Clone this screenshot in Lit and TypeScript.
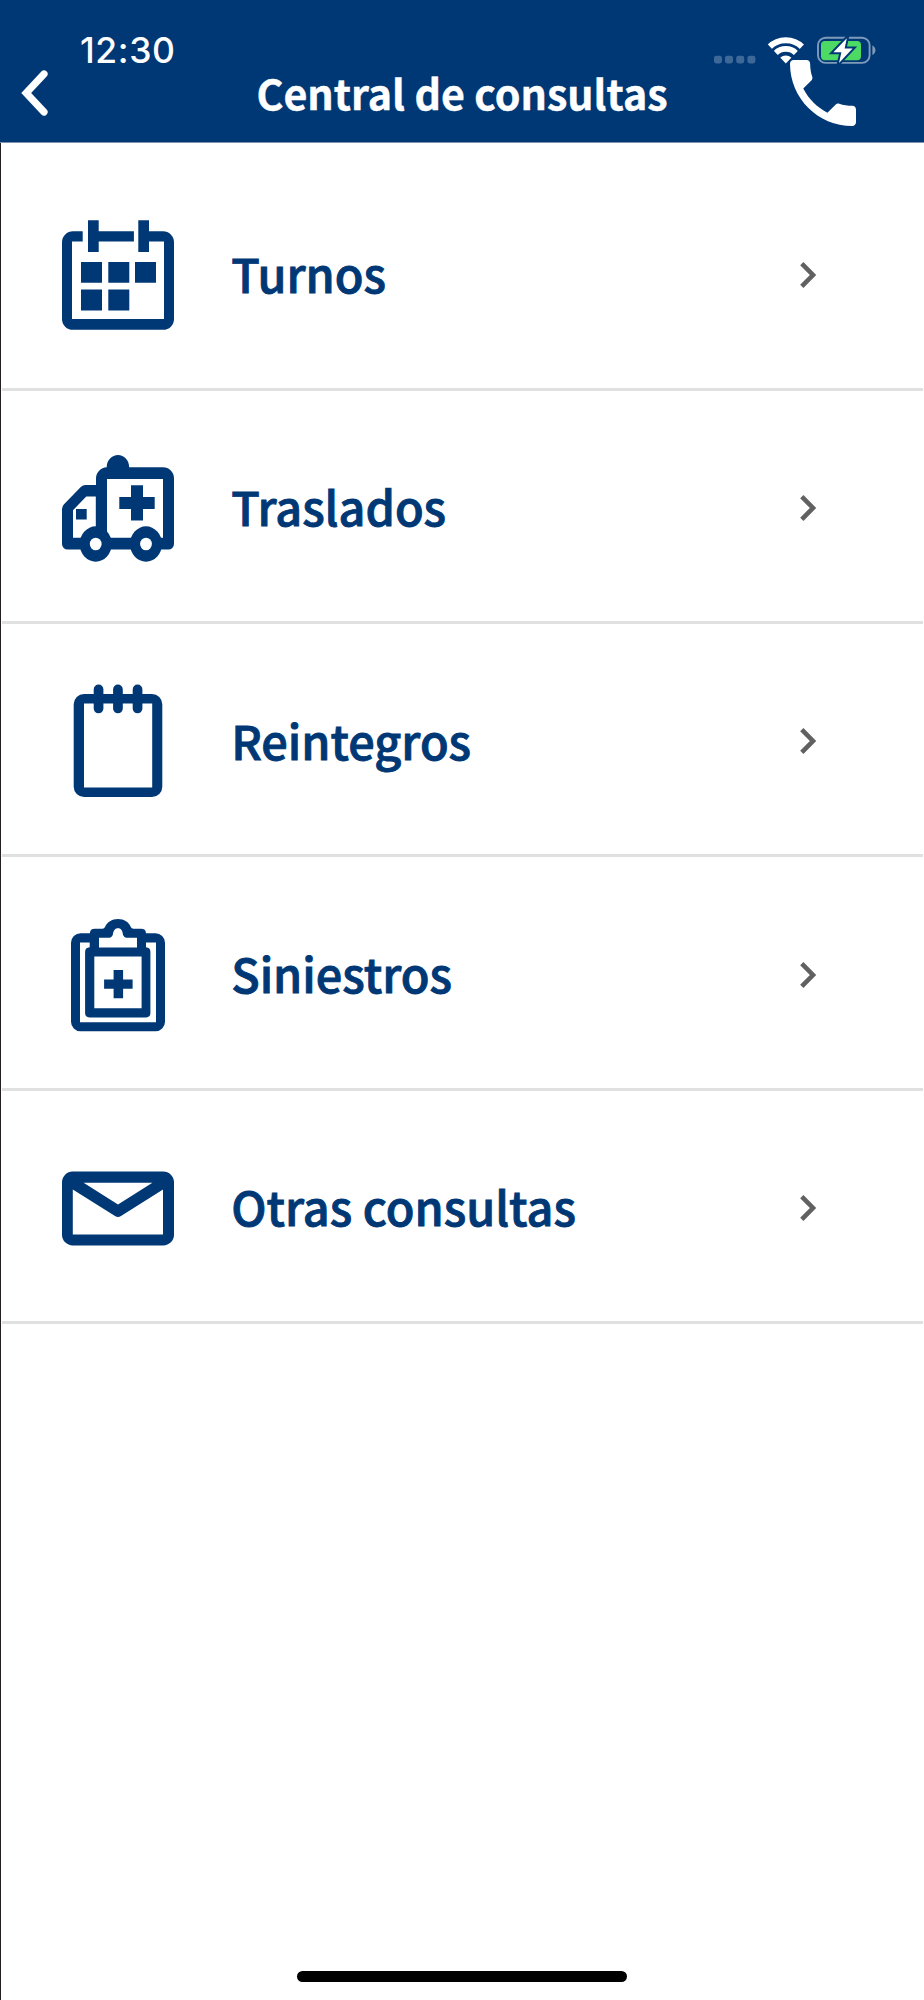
import { LitElement, html, css, svg } from "lit";
import { customElement } from "lit/decorators.js";

const calendar = svg`
  <path d="M24.7 16.2H15A11 11 0 0 0 4 27.2V104A10.8 10.8 0 0 0 14.8 114.8H105.2A10.8 10.8 0 0 0 116 104V27.2A11 11 0 0 0 105 16.2H91V5.3H80.3V37H91V26.4H106V104H14V26.4H24.7Z"/>
  <path d="M30 5.3H40.7V16.2H75.9V26.4H40.7V37H30Z"/>
  <path d="M23 47h21v20.8H23zM50.3 47h21v20.8h-21zM77 47h21v20.8H77zM23 74.4h21v21H23zM50.3 74.4h21v21h-21z"/>`;

const ambulance = svg`
  <path fill-rule="evenodd" d="M48.7 19.3C48.7 12 54 7 60 7S71.2 12 71.2 19.3H105A11 11 0 0 1 116 30.3V96A5.6 5.6 0 0 1 110.4 101.6H9.6A5.6 5.6 0 0 1 4 96V61Q4 58.2 6 56.2L22.8 39Q24.8 37 27.6 37H38V30.3A11 11 0 0 1 48.7 19.3ZM49 31V89.8H105V31ZM28.3 48.6L15 62.2V89.8H37.8V48.6Z"/>
  <path d="M18 61h10.7v10.6H18zM73 37.3h12V49h11.7v12H85v11.6H73V61H61.3V49H73z"/>
  <ellipse cx="37.7" cy="96" rx="16" ry="17.7"/>
  <ellipse cx="88" cy="96" rx="16" ry="17.7"/>
  <ellipse cx="37.7" cy="96" rx="5.9" ry="6.3" fill="#fff"/>
  <ellipse cx="88" cy="96" rx="5.9" ry="6.3" fill="#fff"/>`;

const notepad = svg`
  <path fill-rule="evenodd" d="M26 13H94A10.3 10.3 0 0 1 104.3 23.3V105.7A10.3 10.3 0 0 1 94 116H26A10.3 10.3 0 0 1 15.7 105.7V23.3A10.3 10.3 0 0 1 26 13ZM26 22.4V106.6H94.2V22.4Z"/>
  <rect x="35.7" y="3.6" width="9.7" height="28.7" rx="4.85"/>
  <rect x="55.1" y="3.6" width="9.7" height="28.7" rx="4.85"/>
  <rect x="74.7" y="3.6" width="9.7" height="28.7" rx="4.85"/>`;

const clipboard = svg`
  <path fill-rule="evenodd" d="M22.6 18.2H31.9Q32 13.8 36.8 13.8H44.5Q46.2 13.8 47 12C49 7 54 4 60 4S71 7 72.8 12Q73.6 13.8 75.4 13.8H83Q87.8 13.8 88 18.2H97.4A9.6 9.6 0 0 1 107 27.8V106.6A9.6 9.6 0 0 1 97.4 116.3H22.6A9.6 9.6 0 0 1 13 106.6V27.8A9.6 9.6 0 0 1 22.6 18.2ZM22 27.4V107.2H98V27.4H88V32.2Q92.4 32.6 92.4 36.8V98Q92.4 102.4 88 102.4H31.5Q27.1 102.4 27.1 98V36.8Q27.1 32.6 31.7 32.2V27.4ZM41 22.7V32.4H79V22.7H68.6Q65.8 22.7 64.9 19.6C64.6 15 62.5 13.3 60 13.3S55.4 15 54.9 19.6Q54 22.7 51.2 22.7ZM36.3 41.4V93.2H83.6V41.4Z"/>
  <path d="M55.6 55h9.5v9.5h9.5v9.2h-9.5v9.6h-9.5v-9.6h-9.5v-9.2h9.5z"/>`;

const envelope = svg`
  <path fill-rule="evenodd" d="M14.7 23.6H105.3A10.7 10.7 0 0 1 116 34.3V86.8A10.7 10.7 0 0 1 105.3 97.5H14.7A10.7 10.7 0 0 1 4 86.8V34.3A10.7 10.7 0 0 1 14.7 23.6ZM25.6 34.8L60 56.4L94.4 34.8ZM14.8 41.5V86.4H105V41.5L63 68Q60 69.8 57 68Z"/>`;

const ITEMS = [
  { label: "Turnos", icon: calendar },
  { label: "Traslados", icon: ambulance },
  { label: "Reintegros", icon: notepad },
  { label: "Siniestros", icon: clipboard },
  { label: "Otras consultas", icon: envelope },
];

@customElement("status-bar")
class StatusBar extends LitElement {
  static styles = css`
    :host {
      display: flex;
      justify-content: space-between;
      align-items: flex-start;
      height: 68px;
      padding: 0 48px 0 80px;
      box-sizing: border-box;
      color: #fff;
    }
    .time {
      font: 500 35.5px/44px Inter, sans-serif;
      padding-top: 29px;
      letter-spacing: 0.6px;
    }
    .indicators {
      display: flex;
      padding-top: 34px;
    }
    svg { display: block; }
  `;
  render() {
    return html`
      <div class="time">12:30</div>
      <div class="indicators">
        <svg width="164" height="32" viewBox="0 0 164 32">
          <g fill="#fff" opacity="0.24">
            <rect x="2" y="21.7" width="8" height="7.8" rx="2.4"/>
            <rect x="13" y="21.7" width="8" height="7.8" rx="2.4"/>
            <rect x="24.2" y="21.7" width="8" height="7.8" rx="2.4"/>
            <rect x="35.4" y="21.7" width="8" height="7.8" rx="2.4"/>
          </g>
          <clipPath id="fan"><path d="M73.8 29.5L46 0V-10H102V0Z"/></clipPath>
          <g clip-path="url(#fan)" fill="none" stroke="#fff">
            <circle cx="73.8" cy="29.5" r="23.3" stroke-width="6"/>
            <circle cx="73.8" cy="29.5" r="14.6" stroke-width="5.6"/>
            <circle cx="73.8" cy="29.5" r="4" stroke-width="8"/>
          </g>
          <rect x="106" y="3.7" width="51.6" height="25.2" rx="7.6" fill="none" stroke="#7f9bba" stroke-width="1.9"/>
          <path d="M160.4 11.6Q163.4 13 163.4 16.3T160.4 21Z" fill="#7f9bba"/>
          <rect x="109" y="7" width="40" height="19.3" rx="4" fill="#4cd964"/>
          <path d="M134.8 4.2L121.4 18.2H129.4L127 29L140.6 14.4H132.6Z" fill="#fff" stroke="#003876" stroke-width="4" paint-order="stroke"/>
        </svg>
      </div>
    `;
  }
}

@customElement("nav-bar")
class NavBar extends LitElement {
  static styles = css`
    :host {
      display: grid;
      grid-template-columns: 134px 1fr 134px;
      align-items: center;
      height: 98px;
      margin-top: -24px;
      color: #fff;
    }
    .back { margin-left: 19px; }
    .call { justify-self: end; margin-right: 57px; }
    .title {
      margin: 0;
      padding-bottom: 2px;
      text-align: center;
      font: 700 41.2px/60px "Noto Sans CJK SC", sans-serif;
      -webkit-text-stroke: 0.4px #fff;
    }
    svg { display: block; }
  `;
  render() {
    return html`
      <svg class="back" width="30" height="48" viewBox="0 0 30 48">
        <path d="M25 5L7.2 24L25 43" fill="none" stroke="#fff" stroke-width="7.2" stroke-linecap="round"/>
      </svg>
      <h1 class="title">Central de consultas</h1>
      <svg class="call" width="88" height="88" viewBox="0 0 24 24">
        <path fill="#fff" d="M6.62 10.79c1.44 2.83 3.76 5.14 6.59 6.59l2.2-2.2c.27-.27.67-.36 1.02-.24 1.12.37 2.33.57 3.57.57.55 0 1 .45 1 1V20c0 .55-.45 1-1 1-9.39 0-17-7.61-17-17 0-.55.45-1 1-1h3.5c.55 0 1 .45 1 1 0 1.25.2 2.45.57 3.57.11.35.03.74-.25 1.02l-2.2 2.2z"/>
      </svg>
    `;
  }
}

@customElement("app-root")
class AppRoot extends LitElement {
  static styles = css`
    :host {
      display: flex;
      flex-direction: column;
      height: 2000px;
      background: #fff;
      overflow: hidden;
    }
    .header {
      height: 142px;
      background: #003876;
      border-bottom: 1px solid #7f93ad;
      flex: none;
    }
    .body {
      flex: 1;
      display: flex;
      flex-direction: column;
      justify-content: space-between;
      border-left: 1px solid #231f20;
    }
    .list {
      list-style: none;
      margin: 0;
      padding: 14.4px 1px 0 1px;
    }
    .row {
      display: flex;
      align-items: center;
      box-sizing: border-box;
      height: 233.33px;
      padding: 4px 106px 0 56px;
      border-bottom: 3px solid #e0e0e0;
    }
    .icon { fill: #003876; flex: none; }
    .label {
      flex: 1;
      margin-left: 53.2px;
      padding-bottom: 3px;
      font: 500 46.8px/70px "Noto Sans CJK SC", sans-serif;
      color: #003876;
      -webkit-text-stroke: 0.9px #003876;
    }
    .home {
      align-self: center;
      width: 330px;
      height: 11px;
      border-radius: 6px;
      background: #000;
      margin: 0 1px 18px 0;
    }
  `;
  render() {
    return html`
      <header class="header">
        <status-bar></status-bar>
        <nav-bar></nav-bar>
      </header>
      <main class="body">
        <ul class="list">
          ${ITEMS.map(
            (item) => html`
              <li class="row">
                <svg class="icon" width="120" height="120" viewBox="0 0 120 120">${item.icon}</svg>
                <span class="label">${item.label}</span>
                <svg width="18" height="28" viewBox="0 0 18 28">
                  <path d="M2.8 2.6L14 14L2.8 25.4" fill="none" stroke="#616161" stroke-width="4.6"/>
                </svg>
              </li>
            `
          )}
        </ul>
        <div class="home"></div>
      </main>
    `;
  }
}
